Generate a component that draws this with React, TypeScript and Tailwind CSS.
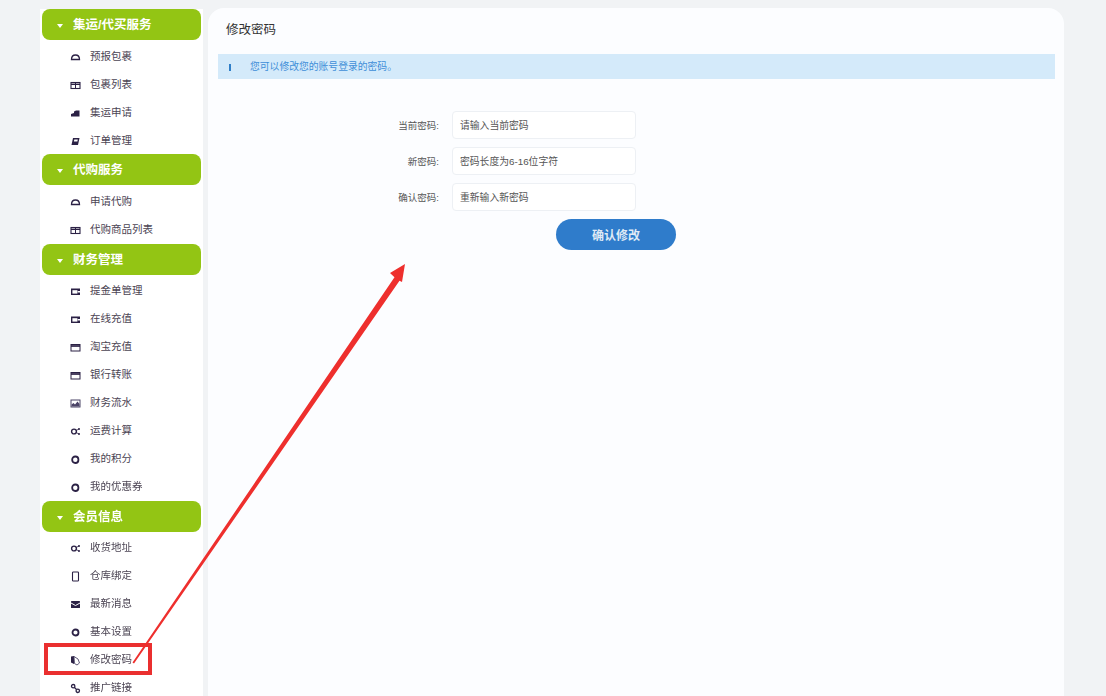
type IconName =
  | "dome"
  | "table"
  | "store"
  | "doc"
  | "wallet"
  | "card"
  | "chart"
  | "share"
  | "ring"
  | "phone"
  | "mail"
  | "dot"
  | "mouse"
  | "link";

// small hand drawn menu glyphs, the reference ones are heavy and mostly filled
function MenuIcon({ name }: { name: IconName }) {
  const ink = "#2b2145";
  return (
    <svg width="11" height="11" viewBox="0 0 11 11" className="mr-[9px] shrink-0">
      {name === "dome" && <path d="M1.5 7.5 Q1.5 3 5.5 3 Q9.5 3 9.5 7.5 Z" fill="none" stroke={ink} strokeWidth="1.3" />}
      {name === "table" && (
        <g fill="none" stroke={ink}>
          <rect x="1" y="2.5" width="9" height="6" strokeWidth="1.1" />
          <path d="M1 4.3H10" strokeWidth="1.4" />
          <path d="M5.5 3V8" strokeWidth="1" />
        </g>
      )}
      {name === "store" && <path d="M1 8.5V6L4 5V3.5L6 2.5H9.5V8.5Z" fill={ink} />}
      {name === "doc" && (
        <g>
          <path d="M3 2H9.5L8 9H1.5Z" fill={ink} />
          <path d="M4.3 3.5H7.8L7.4 5.5H3.9Z" fill="#fff" />
        </g>
      )}
      {name === "wallet" && (
        <g>
          <rect x="1" y="2.5" width="9" height="6.5" fill={ink} />
          <rect x="2.4" y="4.2" width="5" height="3.4" fill="#fff" />
          <rect x="7.6" y="5" width="2.4" height="1.5" fill="#fff" />
        </g>
      )}
      {name === "card" && (
        <g fill="none" stroke={ink}>
          <rect x="1" y="2.5" width="9" height="6.5" strokeWidth="1" />
          <path d="M1 4H10" strokeWidth="1.7" />
        </g>
      )}
      {name === "chart" && (
        <g>
          <rect x="1" y="2" width="9" height="7" fill="none" stroke="#4b4466" strokeWidth="1" />
          <path d="M1.5 8.5V6.5L3.5 5L5 6.5L7.5 3.5L9.5 6V8.5Z" fill="#4b4466" />
        </g>
      )}
      {name === "share" && (
        <g fill="none" stroke={ink}>
          <circle cx="4" cy="5.5" r="2.4" strokeWidth="1.4" />
          <circle cx="9" cy="3" r="1" fill={ink} strokeWidth="0" />
          <circle cx="9" cy="8" r="1" fill={ink} strokeWidth="0" />
          <path d="M6 4.5L9 3M6 6.5L9 8" strokeWidth="0.8" />
        </g>
      )}
      {name === "ring" && <rect x="2.2" y="2.5" width="6.2" height="6.5" rx="3" fill="none" stroke={ink} strokeWidth="1.8" />}
      {name === "phone" && <rect x="2.5" y="1" width="6" height="9" rx="0.8" fill="none" stroke={ink} strokeWidth="1.1" />}
      {name === "mail" && (
        <g>
          <rect x="1" y="2" width="9" height="7" rx="0.6" fill={ink} />
          <path d="M1 4L5.5 6.5L10 4" fill="none" stroke="#fff" strokeWidth="1" />
        </g>
      )}
      {name === "dot" && <circle cx="5.5" cy="5.5" r="3" fill="none" stroke={ink} strokeWidth="1.8" />}
      {name === "mouse" && (
        <g>
          <path d="M1 1.5L4 1V9L1 7.5Z" fill={ink} />
          <path d="M4 1.5L8 4L9.5 8L7 10L4.5 8.5Z" fill="#fff" stroke="#4b4466" strokeWidth="0.9" />
        </g>
      )}
      {name === "link" && (
        <g fill="none" stroke={ink} strokeWidth="1.3">
          <circle cx="3.2" cy="3.2" r="1.7" />
          <circle cx="7.8" cy="7.8" r="1.7" />
          <path d="M4.5 4.5L6.5 6.5" />
        </g>
      )}
    </svg>
  );
}

const groups: { title: string; cls: string; items: [string, IconName][] }[] = [
  {
    title: "集运/代买服务",
    cls: "",
    items: [
      ["预报包裹", "dome"],
      ["包裹列表", "table"],
      ["集运申请", "store"],
      ["订单管理", "doc"],
    ],
  },
  {
    title: "代购服务",
    cls: "",
    items: [
      ["申请代购", "dome"],
      ["代购商品列表", "table"],
    ],
  },
  {
    title: "财务管理",
    cls: "mt-[1px]",
    items: [
      ["提金单管理", "wallet"],
      ["在线充值", "wallet"],
      ["淘宝充值", "card"],
      ["银行转账", "card"],
      ["财务流水", "chart"],
      ["运费计算", "share"],
      ["我的积分", "ring"],
      ["我的优惠券", "ring"],
    ],
  },
  {
    title: "会员信息",
    cls: "mt-[1px]",
    items: [
      ["收货地址", "share"],
      ["仓库绑定", "phone"],
      ["最新消息", "mail"],
      ["基本设置", "dot"],
      ["修改密码", "mouse"],
      ["推广链接", "link"],
    ],
  },
];

const fields = [
  { label: "当前密码:", placeholder: "请输入当前密码" },
  { label: "新密码:", placeholder: "密码长度为6-16位字符" },
  { label: "确认密码:", placeholder: "重新输入新密码" },
];

export default function App() {
  return (
    <div className="relative h-[696px] w-[1106px] overflow-hidden bg-[#f1f3f5] font-['Liberation_Sans','Noto_Sans_CJK_SC',sans-serif]">
      <div className="flex h-full gap-[5px] pl-[40px] pt-[9px] blur-[0.7px]">
        {/* Sidebar */}
        <aside className="flex h-full w-[163px] flex-col bg-white">
          {groups.map((g, i) => (
            <div key={g.title} className={`${g.cls} flex flex-col`}>
              <div className={`${i < 2 ? "mb-[2px]" : "mb-[1px]"} ml-[2px] flex h-[31px] w-[159px] items-center rounded-lg bg-[#93c514] pl-[15px] pt-[2px] text-[12.5px] font-bold text-white`}>
                <span className="mr-[10px] h-0 w-0 border-x-[3px] border-t-[4px] border-x-transparent border-t-white" />
                {g.title}
              </div>
              {g.items.map(([label, icon]) => (
                <div key={label} className="flex h-7 items-center pl-[30px] pt-[2px] text-[10.5px] text-[#4b4453]">
                  <MenuIcon name={icon} />
                  {label}
                </div>
              ))}
            </div>
          ))}
        </aside>

        {/* Main panel */}
        <main className="flex h-[700px] w-[856px] -translate-y-px flex-col rounded-t-2xl bg-[#fcfdff] pl-[10px]">
          <h1 className="mb-[2px] flex h-[44px] items-center pl-[8px] text-[12.5px] text-[#333]">修改密码</h1>
          <div className="flex h-[25px] w-[837px] items-center bg-[#d4eafa] pl-[11px] pt-[2px] text-[9.8px] text-[#3f8ed8]">
            <span className="mr-[19px] h-[7px] w-[2px] bg-[#2f7fc8]" />
            您可以修改您的账号登录的密码。
          </div>
          <form className="mt-[32px] flex flex-col gap-[8px]">
            {fields.map((f) => (
              <div key={f.label} className="flex items-center">
                <label className="w-[221px] pt-[2px] text-right text-[9.5px] text-[#555]">{f.label}</label>
                <div className="ml-[13px] flex h-[28px] w-[184px] items-center rounded border border-[#edf0f4] bg-white pl-[7px] pt-[2px] text-[9.8px] text-[#555]">
                  {f.placeholder}
                </div>
              </div>
            ))}
            <button type="button" className="ml-[338px] h-[31px] w-[120px] rounded-full bg-[#2f7ccb] pt-[3px] text-[12px] font-bold text-[#dfeaf6]">
              确认修改
            </button>
          </form>
        </main>
      </div>

      {/* Red annotation drawn over the page */}
      <div className="absolute left-[44px] top-[643px] h-[32px] w-[108px] border-[4px] border-[#ea2f2f] blur-[0.4px]" />
      <svg className="absolute inset-0 blur-[0.3px]" width="1106" height="696" viewBox="0 0 1106 696">
        <path d="M132.5 662.5 L394.5 277.3 L390 273 L405 264 L402 282 L399.5 280.7 L134 663.5 Z" fill="#ee2f2d" />
      </svg>
    </div>
  );
}
